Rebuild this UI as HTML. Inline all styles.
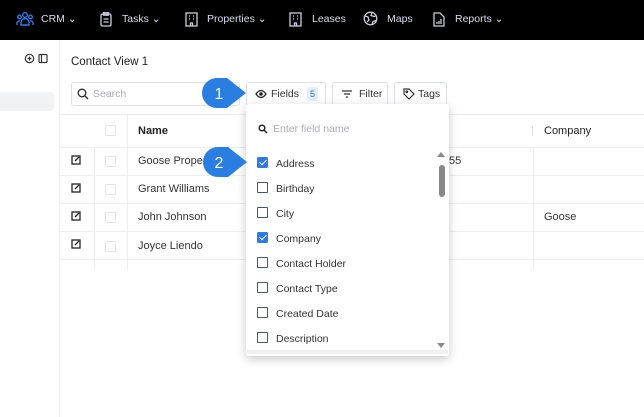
<!DOCTYPE html><html><head><style>
*{box-sizing:border-box;margin:0;padding:0}
body{width:644px;height:417px;overflow:hidden;background:#fff;font-family:"Liberation Sans",sans-serif;position:relative;color:#333}
.a{position:absolute}
.top{left:0;top:0;width:644px;height:40px;background:#000}
.nav{color:#dde;font-size:10.5px;top:13px}
.t{font-size:11px}
.cb{width:11px;height:11px;border:1.3px solid #4a5670;border-radius:1px}
.cbc{width:11px;height:11px;background:#2f7be6;border-radius:1.5px}
.cbc:after{content:"";position:absolute;left:3.5px;top:1px;width:3px;height:6px;border:solid #fff;border-width:0 1.5px 1.5px 0;transform:rotate(45deg)}
.gcb{width:11px;height:11px;border:1px solid #e3e5ea;border-radius:2px}
.hl{height:1px;background:#eceef2;left:60px;width:584px}
.lbl{font-size:10.5px;color:#333;left:276px}
.btn{border:1px solid #dde0e6;border-radius:3px;height:24px;top:82px;font-size:10.5px;color:#333;line-height:22px}
</style></head><body>
<div class="a top"></div>
<svg class="a" style="left:16px;top:11px" width="18" height="16" viewBox="0 0 18 16" fill="none" stroke="#2f7be6" stroke-width="1.4"><circle cx="9" cy="4" r="2.3"/><circle cx="3.5" cy="6" r="1.8"/><circle cx="14.5" cy="6" r="1.8"/><path d="M5 14v-2.5a4 4 0 0 1 8 0V14zM1 14v-2a2.5 2.5 0 0 1 3-2M17 14v-2a2.5 2.5 0 0 0-3-2"/></svg>
<div class="a nav" style="left:41px">CRM ⌄</div>
<svg class="a" style="left:100px;top:12px" width="12" height="15" fill="none" stroke="#ccd" stroke-width="1.3"><rect x="1" y="2" width="10" height="12" rx="1.5"/><rect x="3.5" y="0.7" width="5" height="2.5"/><path d="M3.5 7h5M3.5 10h5"/></svg>
<div class="a nav" style="left:122px">Tasks ⌄</div>
<svg class="a" style="left:185px;top:12px" width="13" height="15" fill="none" stroke="#ccd" stroke-width="1.3"><rect x="1" y="1" width="11" height="13"/><path d="M4 4h1M8 4h1M4 7h1M8 7h1M5.5 14v-3h2v3"/></svg>
<div class="a nav" style="left:207px">Properties ⌄</div>
<svg class="a" style="left:289px;top:12px" width="13" height="15" fill="none" stroke="#ccd" stroke-width="1.3"><rect x="1" y="1" width="11" height="13"/><path d="M4 4h1M8 4h1M4 7h1M8 7h1M5.5 14v-3h2v3"/></svg>
<div class="a nav" style="left:312px">Leases</div>
<svg class="a" style="left:363px;top:11px" width="15" height="15" fill="none" stroke="#ccd" stroke-width="1.3"><circle cx="7.5" cy="7.5" r="6.3"/><path d="M2 5l3 1 1 3-2 2M9 1.5l-1 3 3 1 2.5-1M9 13.5l1-3 3-1"/></svg>
<div class="a nav" style="left:387px">Maps</div>
<svg class="a" style="left:433px;top:12px" width="12" height="15" fill="none" stroke="#ccd" stroke-width="1.3"><path d="M1 1h6l4 4v9H1z"/><path d="M4 12v-2M6 12V9M8 12V7"/></svg>
<div class="a nav" style="left:455px">Reports ⌄</div>

<div class="a" style="left:59px;top:40px;width:1px;height:377px;background:#eceef2"></div>
<div class="a" style="left:0;top:92px;width:54px;height:19px;background:#f1f2f4;border-radius:0 4px 4px 0"></div>
<svg class="a" style="left:24px;top:53px" width="24" height="11" fill="none" stroke="#333" stroke-width="1.2"><circle cx="5.5" cy="5.5" r="4.2"/><path d="M3.5 5.5h4M5.5 3.5v4"/><rect x="15" y="1.5" width="8" height="8" rx="1"/><path d="M17.5 1.5v8"/></svg>

<div class="a" style="left:71px;top:56px;font-size:11.5px;color:#222">Contact View 1</div>
<div class="a" style="left:71px;top:82px;width:169px;height:24px;border:1px solid #dde0e6;border-radius:3px"></div>
<svg class="a" style="left:77px;top:88px" width="12" height="12" fill="none" stroke="#333" stroke-width="1.4"><circle cx="5" cy="5" r="3.8"/><path d="M8 8l3 3"/></svg>
<div class="a" style="left:93px;top:88px;font-size:10.5px;color:#aab">Search</div>

<div class="a btn" style="left:246px;width:80px"><svg style="position:absolute;left:8px;top:6px" width="12" height="10"><path d="M1 5q5-7 10 0q-5 7-10 0z" fill="none" stroke="#222" stroke-width="1.3"/><circle cx="6" cy="5" r="1.8" fill="#222"/></svg><span style="position:absolute;left:24px">Fields</span><span style="position:absolute;left:60px;top:4px;width:11px;height:14px;background:#e3edf9;border-radius:2px;font-size:9px;line-height:14px;text-align:center;color:#2f6fc0">5</span></div>
<div class="a btn" style="left:332px;width:56px"><svg style="position:absolute;left:9px;top:7px" width="10" height="8" stroke="#333" stroke-width="1.2"><path d="M0 1h10M2 4h6M4 7h2"/></svg><span style="position:absolute;left:26px">Filter</span></div>
<div class="a btn" style="left:394px;width:53px"><svg style="position:absolute;left:8px;top:5px" width="12" height="12" fill="none" stroke="#333" stroke-width="1.2"><path d="M1 1h5l5 5-5 5-5-5z"/><circle cx="3.8" cy="3.8" r="0.8"/></svg><span style="position:absolute;left:23px">Tags</span></div>

<div class="a hl" style="top:114px"></div>
<div class="a hl" style="top:147px"></div>
<div class="a hl" style="top:175px"></div>
<div class="a hl" style="top:203px"></div>
<div class="a hl" style="top:231px"></div>
<div class="a hl" style="top:259px"></div>
<div class="a" style="left:94px;top:147px;width:1px;height:122px;background:#eceef2"></div>
<div class="a" style="left:127px;top:114px;width:1px;height:155px;background:#eceef2"></div>
<div class="a" style="left:533px;top:147px;width:1px;height:122px;background:#eceef2"></div>
<div class="a" style="left:532px;top:126px;width:1px;height:10px;background:#ddd"></div>
<div class="a gcb" style="left:105px;top:125px"></div>
<div class="a" style="left:138px;top:125px;font-size:11px;font-weight:bold;color:#222">Name</div>
<div class="a t" style="left:544px;top:125px;color:#222">Company</div>
<div class="a t" style="left:138px;top:155px">Goose Property</div>
<div class="a t" style="left:138px;top:183px">Grant Williams</div>
<div class="a t" style="left:138px;top:211px">John Johnson</div>
<div class="a t" style="left:138px;top:240px">Joyce Liendo</div>
<div class="a t" style="left:449px;top:155px">55</div>
<div class="a t" style="left:544px;top:211px">Goose</div>
<div class="a gcb" style="left:105px;top:156px"></div><div class="a gcb" style="left:105px;top:184px"></div><div class="a gcb" style="left:105px;top:212px"></div><div class="a gcb" style="left:105px;top:241px"></div>
<svg class="a" style="left:71px;top:155px" width="10" height="100" fill="none" stroke="#222" stroke-width="1.3"><g id="e"><rect x="1" y="1" width="8" height="8"/><path d="M4 6l4-4"/></g><use href="#e" y="28"/><use href="#e" y="56"/><use href="#e" y="84"/></svg>

<div class="a" style="left:246px;top:104px;width:203px;height:252px;background:#fff;border-radius:3px;box-shadow:0 3px 10px rgba(0,0,0,.22)"></div>
<svg class="a" style="left:258px;top:124px" width="10" height="10" fill="none" stroke="#222" stroke-width="1.5"><circle cx="4" cy="4" r="2.8"/><path d="M6 6l3 3"/></svg>
<div class="a" style="left:273px;top:123px;font-size:10.5px;color:#aab">Enter field name</div>
<div class="a cbc" style="left:257px;top:157px"></div><div class="a lbl" style="top:158px">Address</div>
<div class="a cb" style="left:257px;top:182px"></div><div class="a lbl" style="top:183px">Birthday</div>
<div class="a cb" style="left:257px;top:207px"></div><div class="a lbl" style="top:208px">City</div>
<div class="a cbc" style="left:257px;top:232px"></div><div class="a lbl" style="top:233px">Company</div>
<div class="a cb" style="left:257px;top:257px"></div><div class="a lbl" style="top:258px">Contact Holder</div>
<div class="a cb" style="left:257px;top:282px"></div><div class="a lbl" style="top:283px">Contact Type</div>
<div class="a cb" style="left:257px;top:307px"></div><div class="a lbl" style="top:308px">Created Date</div>
<div class="a cb" style="left:257px;top:332px"></div><div class="a lbl" style="top:333px">Description</div>
<div class="a" style="left:247px;top:350px;width:201px;height:4px;background:#f0f0f0"></div>
<div class="a" style="left:437px;top:152px;width:0;height:0;border:4px solid transparent;border-bottom:5px solid #888;border-top:0"></div>
<div class="a" style="left:439px;top:165px;width:6px;height:32px;background:#888;border-radius:3px"></div>
<div class="a" style="left:437px;top:343px;width:0;height:0;border:4px solid transparent;border-top:5px solid #888;border-bottom:0"></div>

<svg class="a" style="left:202px;top:78px" width="44" height="30"><path d="M15 0h10l19 15-19 15H15a15 15 0 0 1 0-30z" fill="#2a7de1"/><text x="17" y="21" fill="#fff" font-size="16" font-family="Liberation Sans" text-anchor="middle">1</text></svg>
<svg class="a" style="left:203px;top:147px" width="44" height="30"><path d="M15 0h10l19 15-19 15H15a15 15 0 0 1 0-30z" fill="#2a7de1"/><text x="16" y="21" fill="#fff" font-size="16" font-family="Liberation Sans" text-anchor="middle">2</text></svg>
</body></html>
